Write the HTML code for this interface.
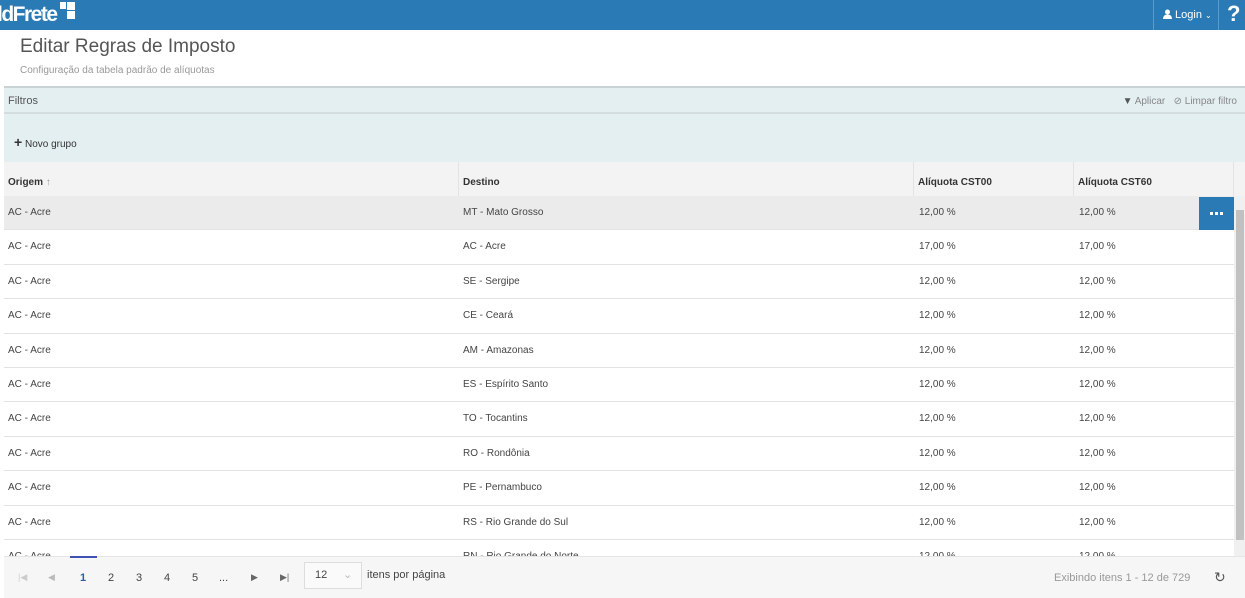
<!DOCTYPE html><html><head><style>
*{box-sizing:border-box;margin:0;padding:0}
body{width:1245px;height:598px;overflow:hidden;font-family:"Liberation Sans",sans-serif;background:#fff;position:relative;color:#333}
.hdr{position:absolute;left:0;top:0;width:1245px;height:30px;background:#2a7bb5}
.logo{position:absolute;left:-3px;top:3px;color:#fff;font-size:21px;font-weight:bold;letter-spacing:-1.5px}
.sq{position:absolute;background:#fff}
.login{position:absolute;left:1153px;top:0;width:66px;height:30px;border-left:1px solid #5b9bc9;border-right:1px solid #5b9bc9;color:#fff;font-size:11px;line-height:30px;padding-left:9px}
.q{position:absolute;left:1227px;top:1px;color:#fff;font-size:22px;font-weight:bold}
h1{position:absolute;left:20px;top:36px;font-size:19px;font-weight:normal;color:#555}
.sub{position:absolute;left:20px;top:65px;font-size:10px;color:#999}
.fb{position:absolute;left:4px;top:86px;width:1241px;height:28px;background:#e4eff2;border-top:2px solid #c9d3d6;border-bottom:2px solid #d3dde0;font-size:11px;color:#555;line-height:26px;padding-left:4px}
.fr{position:absolute;right:8px;top:1px;font-size:10px;color:#888}
.ng{position:absolute;left:4px;top:114px;width:1241px;height:48px;background:#e4eff2;font-size:10px;line-height:56px;padding-left:10px;color:#333}
.th{position:absolute;top:162px;height:35px;background:#f3f3f3;border-bottom:1px solid #ddd;border-right:1px solid #e3e3e3;font-size:10px;font-weight:bold;line-height:42px;padding-left:4px}
.row{position:absolute;left:4px;width:1230px;height:34.4px;border-bottom:1px solid #e2e2e2;font-size:10px;color:#444}
.row span{position:absolute;top:11px}
.sb{position:absolute;left:1234px;top:196px;width:11px;height:360px;background:#f0f0f0}
.pg{position:absolute;left:4px;top:556px;width:1241px;height:42px;background:#f6f6f6;border-top:1px solid #e5e5e5;font-size:11px;color:#444}
.pg span{position:absolute;top:15px}
</style></head><body>
<div class="hdr">
<div class="logo">ldFrete</div>
<div class="sq" style="left:60px;top:2px;width:6px;height:7px"></div>
<div class="sq" style="left:67px;top:2px;width:8px;height:8px"></div>
<div class="sq" style="left:67px;top:11px;width:8px;height:8px"></div>
<div class="login"><svg width="9" height="10" viewBox="0 0 9 10" style="vertical-align:-1px"><circle cx="4.5" cy="3" r="2.5" fill="#fff"/><path d="M0 10 Q0 5.5 4.5 5.5 Q9 5.5 9 10Z" fill="#fff"/></svg> Login <span style="font-size:8px">&#8964;</span></div>
<div class="q">?</div>
</div>
<h1>Editar Regras de Imposto</h1>
<div class="sub">Configuração da tabela padrão de alíquotas</div>
<div class="fb">Filtros<div class="fr"><b style="color:#555">&#9660;</b> Aplicar &nbsp; &#8856; Limpar filtro</div></div>
<div class="ng"><b style="font-size:14px">+</b> Novo grupo</div>
<div class="th" style="left:4px;width:455px">Origem <span style="font-weight:normal;color:#999">&#8593;</span></div>
<div class="th" style="left:459px;width:455px">Destino</div>
<div class="th" style="left:914px;width:160px">Alíquota CST00</div>
<div class="th" style="left:1074px;width:160px">Alíquota CST60</div>
<div class="th" style="left:1234px;width:11px;border:none"></div>
<div style="position:absolute;left:0;top:196px;width:1245px;height:360px;overflow:hidden">
<div class="row" style="top:0;background:#ebebeb"><span style="left:4px">AC - Acre</span><span style="left:459px">MT - Mato Grosso</span><span style="left:915px">12,00 %</span><span style="left:1075px">12,00 %</span><div style="position:absolute;left:1195px;top:1px;width:35px;height:33px;background:#2a7bb5"><div style="position:absolute;left:11px;top:15px;width:3px;height:3px;background:#fff;box-shadow:5px 0 #fff,10px 0 #fff"></div></div></div>
<div class="row" style="top:34.4px"><span style="left:4px">AC - Acre</span><span style="left:459px">AC - Acre</span><span style="left:915px">17,00 %</span><span style="left:1075px">17,00 %</span></div>
<div class="row" style="top:68.8px"><span style="left:4px">AC - Acre</span><span style="left:459px">SE - Sergipe</span><span style="left:915px">12,00 %</span><span style="left:1075px">12,00 %</span></div>
<div class="row" style="top:103.2px"><span style="left:4px">AC - Acre</span><span style="left:459px">CE - Ceará</span><span style="left:915px">12,00 %</span><span style="left:1075px">12,00 %</span></div>
<div class="row" style="top:137.6px"><span style="left:4px">AC - Acre</span><span style="left:459px">AM - Amazonas</span><span style="left:915px">12,00 %</span><span style="left:1075px">12,00 %</span></div>
<div class="row" style="top:172px"><span style="left:4px">AC - Acre</span><span style="left:459px">ES - Espírito Santo</span><span style="left:915px">12,00 %</span><span style="left:1075px">12,00 %</span></div>
<div class="row" style="top:206.4px"><span style="left:4px">AC - Acre</span><span style="left:459px">TO - Tocantins</span><span style="left:915px">12,00 %</span><span style="left:1075px">12,00 %</span></div>
<div class="row" style="top:240.8px"><span style="left:4px">AC - Acre</span><span style="left:459px">RO - Rondônia</span><span style="left:915px">12,00 %</span><span style="left:1075px">12,00 %</span></div>
<div class="row" style="top:275.2px"><span style="left:4px">AC - Acre</span><span style="left:459px">PE - Pernambuco</span><span style="left:915px">12,00 %</span><span style="left:1075px">12,00 %</span></div>
<div class="row" style="top:309.6px"><span style="left:4px">AC - Acre</span><span style="left:459px">RS - Rio Grande do Sul</span><span style="left:915px">12,00 %</span><span style="left:1075px">12,00 %</span></div>
<div class="row" style="top:344px"><span style="left:4px">AC - Acre</span><span style="left:459px">RN - Rio Grande do Norte</span><span style="left:915px">12,00 %</span><span style="left:1075px">12,00 %</span></div>
</div>
<div class="sb"><div style="position:absolute;left:2px;top:14px;width:8px;height:330px;background:#c1c1c1"></div></div>
<div class="pg">
<div style="position:absolute;left:66px;top:-1px;width:27px;height:2px;background:#3f51b5"></div>
<span style="left:14px;color:#ccc;font-size:9px">|◀</span><span style="left:44px;color:#bbb;font-size:9px">◀</span>
<span style="left:76px;color:#2a5fa8;font-weight:bold">1</span><span style="left:104px">2</span><span style="left:132px">3</span><span style="left:160px">4</span><span style="left:188px">5</span><span style="left:215px">...</span>
<span style="left:247px;font-size:9px;color:#666">▶</span><span style="left:276px;font-size:9px;color:#666">▶|</span>
<div style="position:absolute;left:300px;top:5px;width:58px;height:27px;border:1px solid #ddd;background:#fafafa;font-size:11px;line-height:25px;padding-left:10px">12 <span style="position:absolute;left:38px;top:0;color:#bbb">&#8964;</span></div>
<span style="left:363px;top:12px">itens por página</span>
<span style="left:1050px;color:#999">Exibindo itens 1 - 12 de 729</span>
<span style="left:1210px;top:12px;font-size:14px;color:#555">&#8635;</span>
</div>
</body></html>
